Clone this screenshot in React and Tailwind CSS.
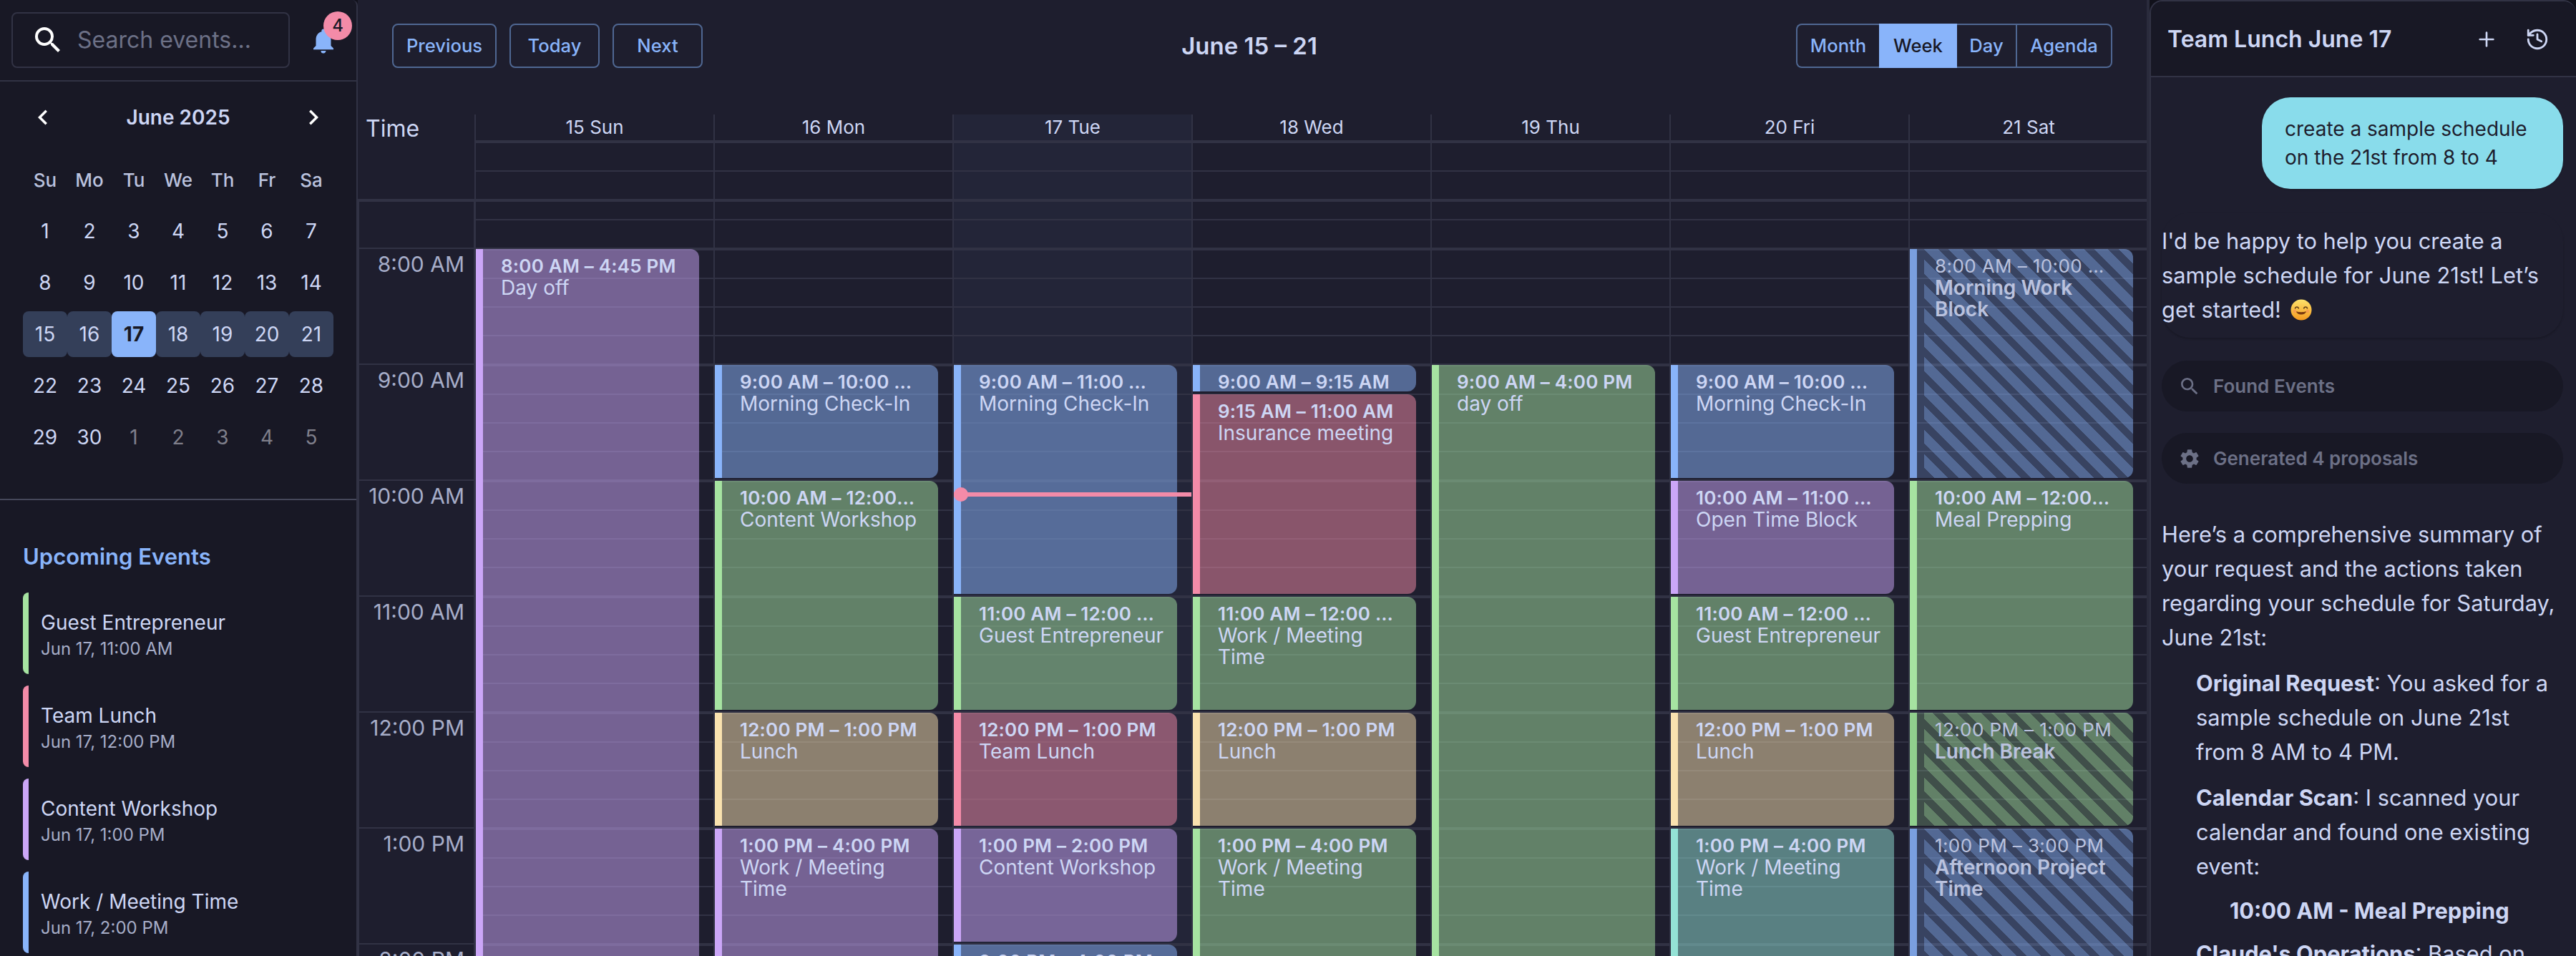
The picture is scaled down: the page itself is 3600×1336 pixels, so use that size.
import React from 'react';
import { Plus, History } from 'lucide-react';
import { MdSearch, MdNotifications, MdChevronLeft, MdChevronRight, MdSettings } from 'react-icons/md';

const colors = {
  blue: { fill: 'bg-[#89b4fa]/50', bar: 'border-[#89b4fa]', dim: 'bg-[#89b4fa]/25', dimBar: 'border-[#7a9fdf]', stripes: 'bg-[repeating-linear-gradient(45deg,transparent,transparent_10px,#89b4fa55_10px,#89b4fa55_24px)]' },
  green: { fill: 'bg-[#a6e3a1]/50', bar: 'border-[#a6e3a1]', dim: 'bg-[#a6e3a1]/25', dimBar: 'border-[#90cf8d]', stripes: 'bg-[repeating-linear-gradient(45deg,transparent,transparent_10px,#a6e3a155_10px,#a6e3a155_24px)]' },
  pink: { fill: 'bg-[#f38ba8]/50', bar: 'border-[#f38ba8]' },
  mauve: { fill: 'bg-[#cba6f7]/50', bar: 'border-[#cba6f7]' },
  yellow: { fill: 'bg-[#f9e2af]/50', bar: 'border-[#f9e2af]' },
  teal: { fill: 'bg-[#94e2d5]/50', bar: 'border-[#94e2d5]' },
};

const days = [
  {
    label: '15 Sun',
    events: [{ start: 8, end: 16.75, time: '8:00 AM – 4:45 PM', title: 'Day off', color: 'mauve' }],
  },
  {
    label: '16 Mon',
    events: [
      { start: 9, end: 10, time: '9:00 AM – 10:00 AM', title: 'Morning Check-In', color: 'blue' },
      { start: 10, end: 12, time: '10:00 AM – 12:00 PM', title: 'Content Workshop', color: 'green' },
      { start: 12, end: 13, time: '12:00 PM – 1:00 PM', title: 'Lunch', color: 'yellow' },
      { start: 13, end: 16, time: '1:00 PM – 4:00 PM', title: 'Work / Meeting Time', color: 'mauve' },
    ],
  },
  {
    label: '17 Tue',
    today: true,
    events: [
      { start: 9, end: 11, time: '9:00 AM – 11:00 AM', title: 'Morning Check-In', color: 'blue' },
      { start: 11, end: 12, time: '11:00 AM – 12:00 PM', title: 'Guest Entrepreneur', color: 'green' },
      { start: 12, end: 13, time: '12:00 PM – 1:00 PM', title: 'Team Lunch', color: 'pink' },
      { start: 13, end: 14, time: '1:00 PM – 2:00 PM', title: 'Content Workshop', color: 'mauve' },
      { start: 14, end: 16, time: '2:00 PM – 4:00 PM', title: 'Work / Meeting Time', color: 'blue' },
    ],
  },
  {
    label: '18 Wed',
    events: [
      { start: 9, end: 9.25, time: '9:00 AM – 9:15 AM', title: '', color: 'blue' },
      { start: 9.25, end: 11, time: '9:15 AM – 11:00 AM', title: 'Insurance meeting', color: 'pink' },
      { start: 11, end: 12, time: '11:00 AM – 12:00 PM', title: 'Work / Meeting Time', color: 'green' },
      { start: 12, end: 13, time: '12:00 PM – 1:00 PM', title: 'Lunch', color: 'yellow' },
      { start: 13, end: 16, time: '1:00 PM – 4:00 PM', title: 'Work / Meeting Time', color: 'green' },
    ],
  },
  {
    label: '19 Thu',
    events: [{ start: 9, end: 16, time: '9:00 AM – 4:00 PM', title: 'day off', color: 'green' }],
  },
  {
    label: '20 Fri',
    events: [
      { start: 9, end: 10, time: '9:00 AM – 10:00 AM', title: 'Morning Check-In', color: 'blue' },
      { start: 10, end: 11, time: '10:00 AM – 11:00 AM', title: 'Open Time Block', color: 'mauve' },
      { start: 11, end: 12, time: '11:00 AM – 12:00 PM', title: 'Guest Entrepreneur', color: 'green' },
      { start: 12, end: 13, time: '12:00 PM – 1:00 PM', title: 'Lunch', color: 'yellow' },
      { start: 13, end: 16, time: '1:00 PM – 4:00 PM', title: 'Work / Meeting Time', color: 'teal' },
    ],
  },
  {
    label: '21 Sat',
    events: [
      { start: 8, end: 10, time: '8:00 AM – 10:00 AM', title: 'Morning Work Block', color: 'blue', proposal: true },
      { start: 10, end: 12, time: '10:00 AM – 12:00 PM', title: 'Meal Prepping', color: 'green' },
      { start: 12, end: 13, time: '12:00 PM – 1:00 PM', title: 'Lunch Break', color: 'green', proposal: true },
      { start: 13, end: 15, time: '1:00 PM – 3:00 PM', title: 'Afternoon Project Time', color: 'blue', proposal: true },
    ],
  },
];

const hours = ['8:00 AM', '9:00 AM', '10:00 AM', '11:00 AM', '12:00 PM', '1:00 PM', '2:00 PM'];

const upcoming = [
  { title: 'Guest Entrepreneur', when: 'Jun 17, 11:00 AM', bar: 'border-[#a6e3a1]' },
  { title: 'Team Lunch', when: 'Jun 17, 12:00 PM', bar: 'border-[#f38ba8]' },
  { title: 'Content Workshop', when: 'Jun 17, 1:00 PM', bar: 'border-[#cba6f7]' },
  { title: 'Work / Meeting Time', when: 'Jun 17, 2:00 PM', bar: 'border-[#89b4fa]' },
];

const weeks = [
  [1, 2, 3, 4, 5, 6, 7],
  [8, 9, 10, 11, 12, 13, 14],
  [15, 16, 17, 18, 19, 20, 21],
  [22, 23, 24, 25, 26, 27, 28],
  [29, 30, 1, 2, 3, 4, 5],
];

const MiniCalendar = () => (
  <div className="px-[32px] pt-[25px]">
    <div className="flex h-[50px] items-center justify-between">
      <button className="flex w-[56px] justify-center text-white"><MdChevronLeft size={42} /></button>
      <span className="text-[28px] font-semibold text-[#cdd6f4]">June 2025</span>
      <button className="flex w-[56px] justify-center text-white"><MdChevronRight size={42} /></button>
    </div>
    <div className="mt-[26px] grid grid-cols-[repeat(7,62px)] auto-rows-[72px] items-center text-center text-[28px] text-[#cdd6f4]">
      {['Su', 'Mo', 'Tu', 'We', 'Th', 'Fr', 'Sa'].map((d) => (
        <span key={d} className="text-[26px] font-medium text-[#bac2de]">{d}</span>
      ))}
      {weeks.map((week, w) =>
        week.map((d) => {
          const outside = w === 4 && d < 6;
          let cls = '';
          if (w === 2) cls = d === 17 ? 'bg-[#89b4fa] font-bold text-[#181825]' : 'bg-[#343f59]';
          if (outside) cls = 'text-[#7f7f8b]';
          return (
            <span key={`${w}-${d}`} className={`flex h-[64px] items-center justify-center rounded-[8px] ${cls}`}>{d}</span>
          );
        })
      )}
    </div>
  </div>
);

const Sidebar = () => (
  <aside className="flex h-full w-[500px] shrink-0 flex-col overflow-hidden rounded-tr-[8px] border-r-2 border-[#313244] bg-[#181825]">
    <div className="flex h-[114px] shrink-0 items-center border-b-2 border-[#313244] pl-[16px]">
      <div className="flex h-[78px] w-[389px] items-center rounded-[8px] border-2 border-[#313244] pl-[25px]">
        <MdSearch size={48} className="shrink-0 text-white" />
        <input
          placeholder="Search events..."
          className="ml-[17px] w-[280px] bg-transparent text-[32px] text-[#cdd6f4] outline-none placeholder:text-[#6c7086]"
        />
      </div>
      <div className="relative ml-[26px] mt-[2px] text-[#89b4fa]">
        <MdNotifications size={42} />
        <span className="absolute -right-[19px] -top-[20px] flex h-[40px] w-[40px] items-center justify-center rounded-full bg-[#f38ba8] text-[24px] font-medium text-[#181825]">4</span>
      </div>
    </div>
    <MiniCalendar />
    <div className="mt-[50px] border-t-2 border-[#45475a] px-[32px] pt-[59px]">
      <h2 className="text-[31px] font-semibold leading-[40px] text-[#89b4fa]">Upcoming Events</h2>
      <div className="mt-[30px] flex flex-col gap-[16px]">
        {upcoming.map((item) => (
          <div key={item.title} className={`h-[114px] rounded-l-[8px] border-l-[8px] pl-[17px] pt-[24px] ${item.bar}`}>
            <div className="text-[28px] leading-[36px] text-[#cdd6f4]">{item.title}</div>
            <div className="mt-[2px] text-[24px] leading-[34px] text-[#a6adc8]">{item.when}</div>
          </div>
        ))}
      </div>
    </div>
  </aside>
);

const Toolbar = () => (
  <div className="flex h-[160px] shrink-0 items-start justify-between px-[48px] pt-[33px]">
    <div className="flex gap-[18px] text-[25.6px] font-medium text-[#89b4fa]">
      <button className="h-[62px] w-[146px] rounded-[8px] border-2 border-[#4f6792]">Previous</button>
      <button className="h-[62px] w-[126px] rounded-[8px] border-2 border-[#4f6792]">Today</button>
      <button className="h-[62px] w-[126px] rounded-[8px] border-2 border-[#4f6792]">Next</button>
    </div>
    <h1 className="text-[33px] font-semibold leading-[62px] text-[#cdd6f4]">June 15 – 21</h1>
    <div className="flex text-[25.6px] font-medium text-[#89b4fa]">
      <button className="h-[62px] w-[116px] rounded-l-[8px] border-2 border-r-0 border-[#4f6792]">Month</button>
      <button className="h-[62px] w-[109px] bg-[#89b4fa] text-[#181825]">Week</button>
      <button className="h-[62px] w-[84px] border-2 border-l-0 border-[#4f6792]">Day</button>
      <button className="h-[62px] w-[133px] rounded-r-[8px] border-2 border-l-0 border-[#4f6792]">Agenda</button>
    </div>
  </div>
);

const AllDayHeader = () => (
  <div className="flex h-[122px] shrink-0 border-b-4 border-[#313244]">
    <div className="w-[163px] shrink-0 pl-[11px] text-[32px] leading-[40px] text-[#cdd6f4]">Time</div>
    <div className="flex min-w-0 flex-1 flex-col">
      <div className="grid h-[40px] shrink-0 grid-cols-[repeat(7,334px)] border-b-4 border-[#313244]">
        {days.map((d) => (
          <div key={d.label} className={`border-l-2 border-[#313244] text-center text-[26px] leading-[36px] text-[#cdd6f4] ${d.today ? 'bg-[#89b4fa]/5' : ''}`}>
            {d.label}
          </div>
        ))}
      </div>
      <div className="grid h-[40px] shrink-0 grid-cols-[repeat(7,334px)] border-b-2 border-[#313244]">
        {days.map((d) => (
          <div key={d.label} className={`border-l-2 border-[#313244] ${d.today ? 'bg-[#89b4fa]/5' : ''}`} />
        ))}
      </div>
      <div className="grid min-h-0 flex-1 grid-cols-[repeat(7,334px)]">
        {days.map((d) => (
          <div key={d.label} className={`border-l-2 border-[#313244] ${d.today ? 'bg-[#89b4fa]/5' : ''}`} />
        ))}
      </div>
    </div>
  </div>
);

const CalEvent = ({ ev }) => {
  const c = colors[ev.color];
  const top = 66 + (ev.start - 8) * 162;
  const height = (ev.end - ev.start) * 162 - 4;
  return (
    <div
      className={`absolute left-0 w-[312px] overflow-hidden rounded-r-[12px] border-l-[10px] pl-[25px] pt-[9px] text-[#cdd6f4] ${ev.proposal ? c.dim : c.fill} ${ev.proposal ? c.dimBar : c.bar}`}
      style={{ top, height }}
    >
      {ev.proposal && <div className={`absolute inset-y-0 left-[10px] right-0 ${c.stripes}`} />}
      <div className={`relative truncate text-[26px] leading-[30px] ${ev.proposal ? 'w-[252px] font-normal tracking-[0.4px] text-[#bac2de]' : 'w-[248px] font-semibold tracking-[0.2px]'}`}>{ev.time}</div>
      <div className={`relative w-[259px] text-[28px] leading-[30px] ${ev.proposal ? 'font-semibold text-[#bac2de]' : ''}`}>{ev.title}</div>
    </div>
  );
};

const HourSlots = () => (
  <div className="h-[162px] border-t-4 border-[#313244]">
    <div className="h-[38px]" />
    <div className="h-[40px] border-t-2 border-[#313244]" />
    <div className="h-[40px] border-t-2 border-[#313244]" />
    <div className="h-[40px] border-t-2 border-[#313244]" />
  </div>
);

const TimeGrid = () => (
  <div className="flex min-h-0 flex-1 overflow-hidden">
    <div className="w-[163px] shrink-0 border-l-2 border-r border-[#313244]">
      <div className="h-[64px]" />
      {hours.map((h) => (
        <div key={h} className="h-[162px] border-t-2 border-[#313244] pr-[13px] text-right text-[30px] leading-[42px] text-[#a6adc8]">
          {h}
        </div>
      ))}
    </div>
    <div className="grid grid-cols-[repeat(7,334px)]">
      {days.map((d) => (
        <div key={d.label} className={`relative border-l-2 border-[#313244] ${d.today ? 'bg-[#89b4fa]/5' : ''}`}>
          <div className="h-[24px]" />
          <div className="h-[40px] border-t-2 border-[#313244]" />
          {hours.map((h) => <HourSlots key={h} />)}
          {d.events.map((ev) => <CalEvent key={ev.time} ev={ev} />)}
          {d.today && (
            <div className="absolute left-0 right-0 top-[406px] h-[6px] bg-[#f38ba8]">
              <div className="absolute -top-[7px] left-0 h-[20px] w-[20px] rounded-full bg-[#f38ba8]" />
            </div>
          )}
        </div>
      ))}
    </div>
  </div>
);

const Smile = () => (
  <svg viewBox="0 0 32 32" className="ml-[4px] inline-block h-[30px] w-[30px] align-[-4px]">
    <defs>
      <linearGradient id="smile" x1="0" y1="0" x2="0" y2="1">
        <stop offset="0" stopColor="#fde36b" />
        <stop offset="1" stopColor="#f59a1f" />
      </linearGradient>
    </defs>
    <circle cx="16" cy="16" r="15.5" fill="url(#smile)" />
    <path d="M7 13.5c1-2.4 4-2.4 5 0M20 13.5c1-2.4 4-2.4 5 0" fill="none" stroke="#5b3a16" strokeWidth="1.8" strokeLinecap="round" />
    <path d="M8.5 18.5c1.5 6 13.500 6 15 0-4 1.200-11 1.200-15 0z" fill="#7a3a10" />
    <circle cx="6.500" cy="18" r="2.500" fill="#f7855a" opacity="0.5" />
    <circle cx="25.500" cy="18" r="2.500" fill="#f7855a" opacity="0.5" />
  </svg>
);

const ChatPanel = () => (
  <section className="flex h-full w-[596px] shrink-0 flex-col overflow-hidden rounded-t-[18px] border-l-2 border-t-2 border-[#313244] bg-[#1e1e2e]">
    <header className="flex h-[106px] shrink-0 items-center justify-between border-b-2 border-[#313244] bg-[#181825] pl-[23px] pr-[37px] pt-[2px]">
      <h2 className="text-[32px] font-semibold text-[#cdd6f4]">Team Lunch June 17</h2>
      <div className="flex items-center gap-[38px] text-[#cdd6f4]">
        <Plus size={32} strokeWidth={2} />
        <History size={34} strokeWidth={2} />
      </div>
    </header>
    <div className="flex flex-col pl-[15px] pr-[18px] pt-[28px]">
      <div className="w-[421px] self-end rounded-[40px] bg-[#89dceb] px-[32px] py-[24px] text-[28px] leading-[40px] text-[#1e1e2e] shadow-sm">
        create a sample schedule on the 21st from 8 to 4
      </div>
      <div className="mt-[33px] h-[175px] rounded-[40px] pt-[16px] text-[30.8px] leading-[48px] text-[#cdd6f4] shadow-[0_2px_3px_rgba(0,0,0,0.2)]">
        I'd be happy to help you create a sample schedule for June 21st! Let’s get started! <Smile />
      </div>
      <div className="mt-[32px] flex h-[71px] items-center rounded-full bg-[#181825] pl-[23px] text-[26px] font-semibold text-[#6c7086]">
        <MdSearch size={32} />
        <span className="ml-[17px]">Found Events</span>
      </div>
      <div className="mt-[30px] flex h-[71px] items-center rounded-full bg-[#181825] pl-[23px] text-[26px] font-semibold text-[#6c7086]">
        <MdSettings size={32} />
        <span className="ml-[17px]">Generated 4 proposals</span>
      </div>
      <div className="mt-[47px] text-[30.8px] leading-[48px] text-[#cdd6f4]">
        <p>Here’s a comprehensive summary of your request and the actions taken regarding your schedule for Saturday, June 21st:</p>
        <div className="mt-[16px] pl-[48px]">
          <p><strong className="font-bold">Original Request</strong>: You asked for a sample schedule on June 21st from 8 AM to 4 PM.</p>
          <p className="mt-[16px]"><strong className="font-bold">Calendar Scan</strong>: I scanned your calendar and found one existing event:</p>
          <p className="mt-[14px] pl-[47px] font-bold">10:00 AM - Meal Prepping</p>
          <p className="mt-[12px]"><strong className="font-bold">Claude's Operations</strong>: Based on</p>
        </div>
      </div>
    </div>
  </section>
);

export default function App() {
  return (
    <div className="flex h-[1336px] w-[3600px] overflow-hidden bg-[#11111b] [font-family:Inter,sans-serif]">
      <Sidebar />
      <main className="flex h-full w-[2500px] shrink-0 flex-col overflow-hidden bg-[#1e1e2e]">
        <Toolbar />
        <AllDayHeader />
        <TimeGrid />
      </main>
      <div className="h-full w-[4px] shrink-0 bg-[#2a2b3c]" />
      <ChatPanel />
    </div>
  );
}
